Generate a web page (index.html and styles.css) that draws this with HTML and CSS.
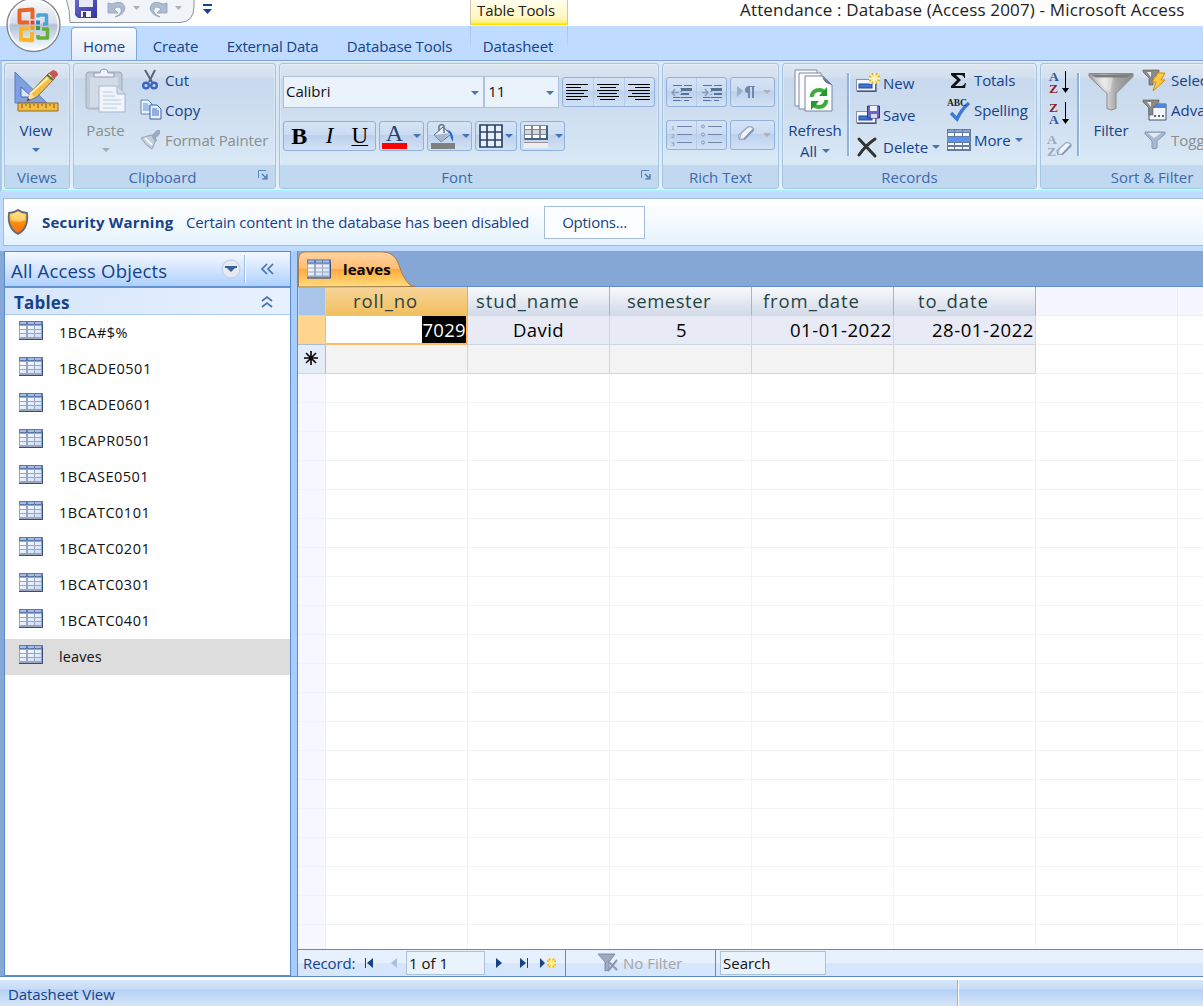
FILE: index.html
```html
<!DOCTYPE html>
<html lang="en">
<head>
<meta charset="utf-8">
<title>Attendance : Database (Access 2007) - Microsoft Access</title>
<link rel="stylesheet" href="styles.css">
</head>
<body>
<svg class="defs" width="0" height="0">
  <defs>
    <linearGradient id="gCell" x1="0" y1="0" x2="1" y2="1"><stop offset="0" stop-color="#fff"/><stop offset="1" stop-color="#c9dcfb"/></linearGradient>
    <linearGradient id="gSilver" x1="0" x2="1"><stop offset="0" stop-color="#999"/><stop offset=".35" stop-color="#e2e2e2"/><stop offset=".6" stop-color="#aaa"/><stop offset="1" stop-color="#888"/></linearGradient>
    <linearGradient id="gOrb" x1="0" y1="0" x2="0" y2="1"><stop offset="0" stop-color="#fbfcfd"/><stop offset=".46" stop-color="#d8dfe9"/><stop offset=".5" stop-color="#b3c0d4"/><stop offset=".8" stop-color="#dfe9f4"/><stop offset="1" stop-color="#fff"/></linearGradient>
    <linearGradient id="gShield" x1="0" y1="0" x2="0" y2="1"><stop offset="0" stop-color="#ffe08a"/><stop offset=".4" stop-color="#ffb32b"/><stop offset=".5" stop-color="#f88f0c"/><stop offset="1" stop-color="#ff6a1a"/></linearGradient>
    <linearGradient id="gTab" x1="0" y1="0" x2="0" y2="1"><stop offset="0" stop-color="#ffd3a0"/><stop offset=".48" stop-color="#ffbd74"/><stop offset=".5" stop-color="#ffa83f"/><stop offset="1" stop-color="#ffdf7c"/></linearGradient>
    <linearGradient id="gPurple" x1="0" y1="0" x2="1" y2="1"><stop offset="0" stop-color="#6a6ad0"/><stop offset="1" stop-color="#33339a"/></linearGradient>
    <symbol id="table" viewBox="0 0 24 19">
      <rect width="24" height="19" fill="#9aa6bd"/><rect width="24" height="4" fill="#5b7ab5"/>
      <path d="M1 1h6v2H1zM9 1h6v2H9zM16 1h6v2h-6z" fill="#a9bce0"/>
      <path d="M1 5h6v3H1zM9 5h6v3H9zM16 5h6v3h-6zM1 9h6v3H1zM9 9h6v3H9zM16 9h6v3h-6zM1 13h6v3H1zM9 13h6v3H9zM16 13h6v3h-6z" fill="url(#gCell)"/>
      <path d="M23.500 3v15.500H0" fill="none" stroke="#3b4f72" stroke-width="1"/>
    </symbol>
    <symbol id="card" viewBox="0 0 24 21">
      <rect x=".5" y="6.500" width="19" height="11" fill="#f4f7fb" stroke="#8794ab"/><path d="M1 18.500h19V8" stroke="#4b566c" stroke-width="1.200" fill="none"/><rect x="3" y="11" width="13" height="4" fill="#3f76d6" stroke="#1d479b"/>
    </symbol>
    <symbol id="funnel" viewBox="0 0 46 40"><path d="M1 2h44v3L28 22v15q-5 3-9 0V22L1 5z" fill="url(#gSilver)" stroke="#8b8b8b"/><path d="M3 3h40l-4 3H8z" fill="#7c7c7c"/><path d="M5 6h20l-3 15z" fill="#fff" opacity=".35"/></symbol>
    <symbol id="launch" viewBox="0 0 10 10"><path d="M.5 8V.5H8" fill="none" stroke="#5b86b8"/><path d="M4 4l4 4M9 4v5H4" fill="none" stroke="#4773aa" stroke-width="1.200"/><path d="M9 5v4H5z" fill="#5b86b8"/></symbol>
    <symbol id="star" viewBox="0 0 10 10"><path d="M0 0h10v10H0z" fill="#ffdf57"/><path d="M5 0v10M0 5h10M1 1l8 8M9 1l-8 8" stroke="#fff6c0"/><path d="M3 0v2M7 0v2M0 3h2M0 7h2M10 3H8M10 7H8M3 10V8M7 10V8" stroke="#d7a318"/></symbol>
    <symbol id="eraser" viewBox="0 0 20 18"><path d="M2 11L12 2q4-1 6 2L8 15H3z" fill="#eef3fa" stroke="#9aa9c2" stroke-width="1.500"/><path d="M3 15l2-6" stroke="#9aa9c2"/><path d="M8 15L18 5" stroke="#8295b5" stroke-width="2"/></symbol>
  </defs>
</svg>

<div class="app">
  <header class="titlebar">
    <span class="tools-title">Table Tools</span>
    <span class="window-title">Attendance : Database (Access 2007) - Microsoft Access</span>
  </header>

  <nav class="tabs">
    <a class="tab active">Home</a><a class="tab create">Create</a><a class="tab external">External Data</a><a class="tab database">Database Tools</a><a class="tab context">Datasheet</a>
  </nav>

  <svg class="quick" width="230" height="56" viewBox="0 0 230 56">
    <path d="M66 -2Q70 10 70 22.500H180Q194 22 194 6V-2z" fill="#f1f5fa" stroke="#8d939c"/>
    <path d="M75 -2h22v20H78l-3-3z" fill="url(#gPurple)"/><path d="M79 -2h14v9H79z" fill="#e6eaf8"/><path d="M81 11h10v6H81z" fill="#f3f3f8"/><path d="M83 12h3v5h-3z" fill="#38388f"/>
    <path d="M108 3v10h10l-4-4q5-4 7 0t-6 8q9-2 10-9-2-9-13-4z" fill="#aebbd0" stroke="#8f9fb8" stroke-width=".8"/>
    <path d="M167 3v10h-10l4-4q-5-4-7 0t6 8q-9-2-10-9 2-9 13-4z" fill="#aebbd0" stroke="#8f9fb8" stroke-width=".8"/>
    <path d="M133 6h7l-3.500 4zM175 6h7l-3.500 4z" fill="#b0b0b0"/>
    <path d="M203 4h9v2h-9zM203 9h9l-4.500 5z" fill="#15428b"/>
    <circle cx="33.500" cy="25" r="26.500" fill="url(#gOrb)" stroke="#84868c" stroke-width="1.300"/><circle cx="33.500" cy="25" r="24.800" fill="none" stroke="#fff" stroke-width="1.500" opacity=".8"/>
    <g fill="none" stroke-linejoin="round">
      <path d="M29 22.500h-9.500V10.500l13-1V19" stroke="#e8632a" stroke-width="4"/>
      <path d="M38 17.500v-2.500h8.500v9H43" stroke="#4aa5dc" stroke-width="3.500"/>
      <path d="M29 28.500h-8V39.500l11 1V32" stroke="#fbb423" stroke-width="4"/>
      <path d="M42 29h5.500v9H38v-3" stroke="#65ad3c" stroke-width="3.500"/>
    </g>
    <path d="M30.500 20.500h4v4h-4z" fill="#e6402a"/><path d="M36 20.500h4v4h-4z" fill="#2d84cf"/><path d="M30.500 26h4v4h-4z" fill="#f49a18"/><path d="M36 26h4v4h-4z" fill="#3c9c40"/>
  </svg>

  <section class="ribbon">
    <div class="group views">
      <div class="body">
        <div class="big">
          <svg width="46" height="44" viewBox="0 0 46 44"><path d="M2 3l32 31H2z" fill="#7f9fe0" stroke="#5a7cc8"/><path d="M8 18l11 10H8z" fill="#dbe6fb" stroke="#4468b8"/><path d="M14 32l4-9L36 4l6 5-18 19z" fill="#f2bc4e" stroke="#8f6a2a"/><path d="M17 25L38 6" stroke="#fff0a8" stroke-width="2"/><path d="M14 32l3-8 5 4z" fill="#f7dfb5"/><path d="M14 32l1-3 2 2z" fill="#333"/><path d="M36 4l4-3q5 1 5 5l-4 4z" fill="#c7555d"/><path d="M34 6l6 5" stroke="#526d55" stroke-width="2"/><path d="M5 34h40v8H5z" fill="#f4bd43" stroke="#96681c"/><path d="M9 35v4M13 35v2M17 35v4M21 35v2M25 35v4M29 35v2M33 35v4M37 35v2M41 35v4" stroke="#7c5414"/></svg>
          <span>View</span><i class="arrow"></i>
        </div>
      </div>
      <div class="caption">Views</div>
    </div>

    <div class="group clipboard">
      <div class="body">
        <div class="big muted">
          <svg width="42" height="46" viewBox="0 0 42 46"><rect x="1" y="4" width="36" height="37" rx="3" fill="#c0cada" stroke="#a0abba"/><rect x="5" y="9" width="28" height="30" fill="#d3dbe7"/><path d="M9 9V5h6q0-4 4-4t4 4h6v4z" fill="#eef2f7" stroke="#929daf"/><path d="M14 18h18l8 8v18H14z" fill="#f1f5fb" stroke="#a6b5cb"/><path d="M32 18v8h8" fill="#cfdbea" stroke="#a6b5cb"/><path d="M18 24h10M18 28h12M18 32h18M18 36h18M18 40h14" stroke="#bccadd"/></svg>
          <span>Paste</span><i class="arrow"></i>
        </div>
        <div class="list">
          <div class="item cut"><svg width="22" height="22" viewBox="0 0 22 22"><path d="M5 1l7 12M15 1L9 13" stroke="#58647a" stroke-width="2"/><circle cx="6" cy="16.500" r="2.800" fill="none" stroke="#3b67bd" stroke-width="2.400"/><circle cx="14" cy="16.500" r="2.800" fill="none" stroke="#3b67bd" stroke-width="2.400"/></svg><span>Cut</span></div>
          <div class="item copy"><svg width="22" height="22" viewBox="0 0 22 22"><path d="M1 1h7l4 4v10H1z" fill="#eaf2ff" stroke="#5e82be"/><path d="M3 5h5M3 7h7M3 9h7M3 11h7" stroke="#6289ca"/><path d="M10 6h7l4 4v10H10z" fill="#eaf2ff" stroke="#355fa8"/><path d="M12 10h5M12 12h7M12 14h7M12 16h7" stroke="#3c6cc0"/></svg><span>Copy</span></div>
          <div class="item painter muted"><svg width="22" height="20" viewBox="0 0 22 20"><path d="M1 8l10-3 5 5-4 9q-6-3-11-11z" fill="#c3ccdc" stroke="#96a3b8"/><path d="M11 5l2-1 4-4h3v4l-4 4 1 3-2 1z" fill="#9ca9be"/><path d="M5 8l7 7" stroke="#f6f8fc" stroke-width="2"/></svg><span>Format Painter</span></div>
        </div>
      </div>
      <div class="caption">Clipboard<svg class="launcher" width="10" height="10"><use href="#launch"/></svg></div>
    </div>

    <div class="group font">
      <div class="body">
        <div class="row first">
          <div class="combo face">Calibri<i class="arrow"></i></div><div class="combo size">11<i class="arrow"></i></div>
          <div class="buttons aligns">
            <svg width="31" height="28" viewBox="0 0 31 28"><path d="M3 6.500h22M3 9.500h15M3 12.500h22M3 15.500h18M3 18.500h22M3 21.500h15" stroke="#000"/></svg>
            <svg width="31" height="28" viewBox="0 0 31 28"><path d="M3 6.500h22M6 9.500h16M3 12.500h22M5 15.500h18M3 18.500h22M6 21.500h15" stroke="#000"/></svg>
            <svg width="31" height="28" viewBox="0 0 31 28"><path d="M3 6.500h22M10 9.500h15M3 12.500h22M7 15.500h18M3 18.500h22M10 21.500h15" stroke="#000"/></svg>
          </div>
        </div>
        <div class="row second">
          <div class="buttons letters"><b>B</b><em>I</em><u>U</u></div>
          <div class="buttons single"><span class="glyph red">A</span><i class="arrow"></i></div>
          <div class="buttons single"><svg width="26" height="26" viewBox="0 0 26 26"><path d="M4 12l9-8 8 7-10 8z" fill="#eaf0f8" stroke="#53667f"/><path d="M4 12l16-2-9 9z" fill="#a6b6cc"/><path d="M9 8V3q3-3 5 0v7" fill="none" stroke="#6a7180" stroke-width="1.500"/><path d="M16 7q8 0 7 12-3-4-3-8z" fill="#2d66d1"/><path d="M1 20h24v6H1z" fill="#808080"/></svg><i class="arrow"></i></div>
          <div class="buttons single narrow"><svg width="26" height="26" viewBox="0 0 26 26"><path d="M2 2h22v22H2zM2 9h22M2 17h22M9 2v22M17 2v22" fill="#e7effb" stroke="#2d4268" stroke-width="1.700"/></svg><i class="arrow"></i></div>
          <div class="buttons single"><svg width="26" height="26" viewBox="0 0 26 26"><rect x="1" y="2" width="24" height="15" fill="#7f8896"/><path d="M2 3h6v3H2zM10 3h6v3h-6zM18 3h5v3h-5zM2 12h6v3H2zM10 12h6v3h-6zM18 12h5v3h-5z" fill="#fff"/><path d="M2 7h6v4H2zM10 7h6v4h-6zM18 7h5v4h-5z" fill="#d6d6d6"/><path d="M24 3v13H2" fill="none" stroke="#34507a" stroke-width="1.500"/><path d="M1 19h24v6H1z" fill="#eee"/><path d="M1 19.500h24" stroke="#9a9292"/></svg><i class="arrow"></i></div>
        </div>
      </div>
      <div class="caption">Font<svg class="launcher" width="10" height="10"><use href="#launch"/></svg></div>
    </div>

    <div class="group rich">
      <div class="body">
        <div class="row first">
          <div class="buttons pair"><svg width="30" height="28" viewBox="0 0 30 28"><path d="M6 7.500h9M17 7.500h8M6 19.500h7M6 22.500h7M17 22.500h5" stroke="#57719a"/><path d="M14 10h11v3H14zM14 15h8v2h-8zM14 19h11v1H14z" fill="#57719a"/><path d="M12 14.500H6M8 11l-3 3.500L8 18" fill="none" stroke="#8a9dbb" stroke-width="1.500"/><path d="M14 7v16" stroke="#57719a" stroke-dasharray="1 2"/></svg><svg width="30" height="28" viewBox="0 0 30 28"><path d="M6 7.500h9M17 7.500h8M6 19.500h7M6 22.500h7M17 22.500h5" stroke="#57719a"/><path d="M14 10h11v3H14zM17 15h8v2h-8zM14 19h11v1H14z" fill="#57719a"/><path d="M5 14.500h6M8 11l3 3.500L8 18" fill="none" stroke="#8a9dbb" stroke-width="1.500"/><path d="M14 7v16" stroke="#57719a" stroke-dasharray="1 2"/></svg></div>
          <div class="buttons drop"><svg width="26" height="28" viewBox="0 0 26 28"><path d="M6 8l6 5-6 6z" fill="#9aadca"/><path d="M24 8h-7q-3 1-3 4t3 3v5h2V9h2v11h2V9h1z" fill="#7087ab"/></svg><i class="arrow faded"></i></div>
        </div>
        <div class="row second">
          <div class="buttons pair"><svg width="30" height="28" viewBox="0 0 30 28"><path d="M10 5.500h15M10 13.500h15M10 21.500h15" stroke="#7087ab"/><g class="tiny"><text x="4" y="8.500">1</text><text x="4" y="16.500">2</text><text x="4" y="24.500">3</text></g></svg><svg width="30" height="28" viewBox="0 0 30 28"><path d="M11 5.500h14M11 13.500h14M11 21.500h14" stroke="#7087ab"/><g fill="#c6d3e8" stroke="#899cba"><circle cx="6" cy="5.500" r="1.500"/><circle cx="6" cy="13.500" r="1.500"/><circle cx="6" cy="21.500" r="1.500"/></g></svg></div>
          <div class="buttons drop"><svg width="26" height="28" viewBox="0 0 26 28"><use href="#eraser" x="5" y="4" width="20" height="17"/></svg><i class="arrow faded"></i></div>
        </div>
      </div>
      <div class="caption">Rich Text</div>
    </div>

    <div class="group records">
      <div class="body">
        <div class="big refresh">
          <svg width="42" height="46" viewBox="0 0 42 46"><path d="M1 2h22v36H1z" fill="#fafcff" stroke="#7e8a9f"/><path d="M5 5h22v36H5z" fill="#fafcff" stroke="#7e8a9f"/><path d="M11 8h18l9 9v26H11z" fill="#fff" stroke="#77839a"/><path d="M28 8q2 8 10 9z" fill="#5c6f92"/><g fill="none" stroke="#3aae3d" stroke-width="4"><path d="M17.500 29q1-7 8-7 3 0 5 2.500"/><path d="M32.500 32q-1 7-8 7-3 0-5-2.500"/></g><path d="M33 19v9h-8zM17 42v-9h8z" fill="#239a2d"/></svg>
          <span>Refresh</span><span class="second-line">All<i class="arrow"></i></span>
        </div>
        <i class="divider"></i>
        <div class="list record-a">
          <div class="item new"><svg width="24" height="21"><use href="#card"/><use href="#star" x="13" y="0" width="11" height="11"/></svg><span>New</span></div>
          <div class="item save"><svg width="24" height="21"><use href="#card"/><path d="M11.500 1h12v12h-12z" fill="#6b67c0" stroke="#343388"/><path d="M14 1h7v5h-7z" fill="#eef0ff"/><path d="M15 9h6v4h-6z" fill="#d5d6ef"/></svg><span>Save</span></div>
          <div class="item delete"><svg width="24" height="21"><path d="M3 2l16 17M19 2q-9 6-16 16" stroke="#333" stroke-width="3" fill="none" stroke-linecap="round"/></svg><span>Delete</span><i class="arrow"></i></div>
        </div>
        <div class="list record-b">
          <div class="item totals"><svg width="24" height="21"><path d="M4 3h14v5h-1q0-3-4-3H9l5 5-6 6h6q3 0 4-3h1l-1 5H4v-2l6-6-6-5z" fill="#111"/></svg><span>Totals</span></div>
          <div class="item spelling"><svg width="24" height="24" viewBox="0 0 24 24"><path d="M4 15l6 6Q14 12 22 5" fill="none" stroke="#3f78d6" stroke-width="3.500"/><text class="abc" x="0" y="8">ABC</text></svg><span>Spelling</span></div>
          <div class="item more"><svg width="24" height="22" viewBox="0 0 24 22"><rect width="24" height="22" fill="#66799e"/><path d="M1 1h6v2H1zM8 1h7v2H8zM16 1h7v2h-7z" fill="#87a4d9"/><path d="M1 4h6v3H1zM8 4h7v3H8zM16 4h6v3h-6zM1 14h6v2H1zM8 14h7v2H8zM16 14h6v2h-6zM1 18h6v2H1zM8 18h7v2H8zM16 18h6v2h-6z" fill="#f5f8ff"/><path d="M0 8h23v5H0z" fill="#5a92ec"/></svg><span>More</span><i class="arrow"></i></div>
        </div>
      </div>
      <div class="caption">Records</div>
    </div>

    <div class="group sort">
      <div class="body">
        <div class="sorters">
          <svg width="24" height="24" viewBox="0 0 24 24"><text class="sort-letter blue" x="1" y="10">A</text><text class="sort-letter maroon" x="1" y="22">Z</text><path d="M17.500 0v20" stroke="#000"/><path d="M14 17h7l-3.500 5z" fill="#000"/></svg>
          <svg width="24" height="24" viewBox="0 0 24 24"><text class="sort-letter maroon" x="1" y="10">Z</text><text class="sort-letter blue" x="1" y="22">A</text><path d="M17.500 0v20" stroke="#000"/><path d="M14 17h7l-3.500 5z" fill="#000"/></svg>
          <svg width="26" height="25" viewBox="0 0 26 25"><text class="sort-letter gray" x="-1" y="11">A</text><text class="sort-letter gray" x="-1" y="23">Z</text><use href="#eraser" x="7" y="8" width="18" height="16"/></svg>
        </div>
        <i class="divider"></i>
        <div class="big filter"><svg width="46" height="40"><use href="#funnel"/></svg><span>Filter</span></div>
        <div class="list filters">
          <div class="item"><svg width="24" height="23"><path d="M0 1h16v2l-6 6v7H6V9L0 3z" fill="#8a8a8a" stroke="#555" stroke-width=".6"/><path d="M4 3h4v5z" fill="#eee"/><path d="M15 4h7l-4 7h4L10 22l3-9H9z" fill="#ffc93c" stroke="#d18b14"/></svg><span>Selection</span></div>
          <div class="item"><svg width="24" height="21"><path d="M6 4h17v16H6z" fill="#f2f6fd" stroke="#43536f"/><path d="M6 4h17v4H6z" fill="#4a87e5"/><path d="M11 16h2M15 16h2M19 16h2" stroke="#333" stroke-width="1.500"/><path d="M0 0h16v2l-6 6v7H6V8L0 2z" fill="#8a8a8a" stroke="#555" stroke-width=".6"/><path d="M4 2h4v5z" fill="#eee"/></svg><span>Advanced</span></div>
          <div class="item muted"><svg width="24" height="21"><path d="M2 2h20v2l-8 7v7q-3 2-5 0v-7L2 4z" fill="#a9b9d1" stroke="#8496b4"/><path d="M5 3h13l-7 5z" fill="#e4ebf5"/></svg><span>Toggle</span></div>
        </div>
      </div>
      <div class="caption">Sort &amp; Filter</div>
    </div>
  </section>

  <section class="message">
    <svg width="22" height="26" viewBox="0 0 22 26"><path d="M11 1q4 3 9 3 2 15-9 21Q0 19 2 4q5 0 9-3z" fill="url(#gShield)" stroke="#666b73" stroke-width="1.800"/><path d="M11 3q3 2 7 3v5q-7 4-14 0V6q4-1 7-3z" fill="#fff2b0" opacity=".45"/></svg>
    <strong>Security Warning</strong><span>Certain content in the database has been disabled</span><button type="button">Options...</button>
  </section>

  <main class="workspace">
    <aside class="pane">
      <div class="pane-head"><span>All Access Objects</span>
        <svg class="circle" width="20" height="20" viewBox="0 0 20 20"><circle cx="10" cy="10" r="9" fill="#e5eaf2" stroke="#bccbe0"/><path d="M4 7h12v2h-2l-4 4-4-4H4z" fill="#3b5f9e"/></svg>
        <svg class="collapse" width="44" height="30" viewBox="0 0 44 30"><path d="M.5 1v28" stroke="#9fbce4"/><path d="M1.500 1v28" stroke="#fff"/><path d="M23 10l-5 5 5 5M29 10l-5 5 5 5" fill="none" stroke="#4773b3" stroke-width="1.700"/></svg>
      </div>
      <div class="pane-group"><strong>Tables</strong><svg width="12" height="14" viewBox="0 0 12 14"><path d="M1 6l5-4 5 4M1 12l5-4 5 4" fill="none" stroke="#4773b3" stroke-width="1.700"/></svg></div>
      <ul class="objects">
        <li><svg width="24" height="19"><use href="#table"/></svg><span>1BCA#$%</span></li>
        <li><svg width="24" height="19"><use href="#table"/></svg><span>1BCADE0501</span></li>
        <li><svg width="24" height="19"><use href="#table"/></svg><span>1BCADE0601</span></li>
        <li><svg width="24" height="19"><use href="#table"/></svg><span>1BCAPR0501</span></li>
        <li><svg width="24" height="19"><use href="#table"/></svg><span>1BCASE0501</span></li>
        <li><svg width="24" height="19"><use href="#table"/></svg><span>1BCATC0101</span></li>
        <li><svg width="24" height="19"><use href="#table"/></svg><span>1BCATC0201</span></li>
        <li><svg width="24" height="19"><use href="#table"/></svg><span>1BCATC0301</span></li>
        <li><svg width="24" height="19"><use href="#table"/></svg><span>1BCATC0401</span></li>
        <li class="selected"><svg width="24" height="19"><use href="#table"/></svg><span>leaves</span></li>
      </ul>
    </aside>
    <section class="document">
      <div class="doc-tabs">
        <svg class="tab-shape" width="120" height="36" viewBox="0 0 120 36"><path d="M.5 36V8Q1 .8 8 .8H84Q97 1 101 14T112 34Q114 35 118 35.500z" fill="url(#gTab)" stroke="#a77a4a"/></svg>
        <div class="tab-label"><svg width="24" height="20"><use href="#table" width="24" height="20"/></svg><strong>leaves</strong></div>
      </div>
      <table class="sheet">
        <colgroup><col class="selector"><col class="field"><col class="field"><col class="field"><col class="field"><col class="field"><col class="field"><col></colgroup>
        <thead><tr><th class="corner"></th><th class="current roll">roll_no</th><th class="stud">stud_name</th><th class="sem">semester</th><th class="from">from_date</th><th class="last to">to_date</th><th class="blank"></th><th class="blank"></th></tr></thead>
        <tbody>
          <tr class="data"><th class="now"></th><td class="editing"><mark>7029</mark></td><td class="name">David</td><td class="mid">5</td><td class="date">01-01-2022</td><td class="date">28-01-2022</td><td class="blank"></td><td class="blank"></td></tr>
          <tr class="fresh"><th><svg width="14" height="14" viewBox="0 0 14 14"><path d="M7 0v14M0 7h14M2 2l10 10M12 2L2 12" stroke="#000" stroke-width="1.600"/></svg></th><td></td><td></td><td></td><td></td><td></td><td class="blank"></td><td class="blank"></td></tr>
        </tbody>
      </table>
      <div class="empty-rows"></div>
      <footer class="navigator">
        <span class="record">Record:</span>
        <svg width="36" height="12" viewBox="0 0 36 12"><path d="M0 1h1v10H0zM8 1v10L2 6z" fill="#15428b"/><path d="M32 1v10l-6-5z" fill="#a9bfe3"/></svg>
        <span class="position">1 of 1</span>
        <svg class="moves" width="62" height="12" viewBox="0 0 62 12"><path d="M1 1l6 5-6 5zM25 1l6 5-6 5zM32 1h1v10h-1zM45 1l5 5-5 5z" fill="#15428b"/><use href="#star" x="52" y="1" width="9" height="10"/></svg>
        <span class="no-filter"><svg width="22" height="20" viewBox="0 0 22 20"><path d="M1 1h17l-6 8v8l-4 1V9z" fill="#9daac0" stroke="#7f8da8"/><path d="M11 8l9 9M20 7l-9 11" stroke="#8b99b3" stroke-width="2"/></svg>No Filter</span>
        <span class="search">Search</span>
      </footer>
    </section>
  </main>

  <footer class="status"><span>Datasheet View</span></footer>
</div>
</body>
</html>
```
FILE: styles.css
```css
* { box-sizing: border-box; }
body { margin: 0; font-family: "Open Sans", "Noto Sans", sans-serif; font-size: 15px; line-height: 20px; color: #15428b; overflow: hidden; }
svg { display: block; flex: none; overflow: visible; }
.defs { position: absolute; }
.app { position: relative; width: 1203px; height: 1006px; display: flex; flex-direction: column; overflow: hidden; background: #bfdbff; white-space: nowrap; }

.titlebar { height: 26px; flex: none; display: flex; background: #fff; padding-left: 470px; color: #222; }
.tools-title { width: 98px; height: 25px; padding: 0 0 0 6px; letter-spacing: -.1px; border: solid #ccc9aa; border-width: 0 1px; background: linear-gradient(#fffef0, #fff6b8 75%, #ffee6a 92%, #ffdf00 96%); }
.window-title { margin-left: 172px; font-size: 17px; letter-spacing: .16px; }

.tabs { height: 34px; flex: none; display: flex; align-items: flex-end; padding-left: 71px; background: #bfdbff; }
.tab { height: 34px; padding-top: 10px; text-align: center; letter-spacing: -.1px; }
.tab.active { width: 66px; height: 33px; padding-top: 8px; border: 1px solid #7da9df; border-bottom: 0; border-radius: 4px 4px 0 0; background: linear-gradient(#fafcff, #e0ebf8); }
.create { width: 77px; }
.external { width: 117px; letter-spacing: -.2px; }
.database { width: 137px; }
.context { width: 98px; margin-left: 2px; padding-right: 2px; border: solid; border-width: 0 1px; border-image: linear-gradient(#9fbfe9, #bfdbff 75%) 1; }
.quick { position: absolute; left: 0; top: 0; }

.ribbon { height: 132px; flex: none; display: flex; gap: 3px; padding: 2px 0 0 3px; border-top: 1px solid #7ea7e0; border-left: 2px solid #a7c9ef; border-bottom: 2px solid #a5f0fa; background: linear-gradient(#dfeaf5, #d5e4f4 50%, #e3f3fc); }
.group { height: 126px; flex: none; border: 1px solid #a6c4df; border-radius: 3px; overflow: hidden; box-shadow: inset 0 0 0 1px #e4effa99; background: linear-gradient(#dfe8f2, #d2dfed 14px, #c8d8ed 15px, #d8e8f5 100px); }
.views { width: 66px; margin-left: -1px; } .clipboard { width: 203px; } .font { width: 380px; } .rich { width: 117px; } .records { width: 255px; } .sort { width: 230px; }
.body { height: 101px; display: flex; }
.caption { height: 24px; padding-top: 2px; text-align: center; color: #3e6aaa; background: #c1d8f1; position: relative; }
.clipboard .caption, .font .caption { padding-right: 24px; }
.sort .caption { padding-right: 6px; }
.launcher { position: absolute; right: 7px; top: 5px; }
.muted { color: #8d8d8d; }
.arrow { width: 0; height: 0; flex: none; border: solid transparent; border-width: 4px 4px 0; border-top-color: #4773b3; }
.muted .arrow { border-top-color: #aaa; }
.arrow.faded { border-top-color: #b5b0b0; }
.big { display: flex; flex-direction: column; align-items: center; padding-top: 4px; }
.big > svg { height: 46px; }
.big span { margin-top: 6px; }
.big .arrow { margin-top: 8px; }
.views .big { width: 62px; }
.clipboard .big { width: 63px; }
.list { display: flex; flex-direction: column; }
.item { height: 30px; display: flex; align-items: center; gap: 3px; }
.clipboard .list { padding: 1px 0 0 3px; }
.painter { letter-spacing: -.1px; }

.font .body, .rich .body { display: block; padding: 12px 3px; }
.row { display: flex; }
.font .row.second { gap: 3px; margin-top: 13px; }
.combo { height: 32px; border: 1px solid #abc1de; background: #eaf2fb; color: #111; display: flex; align-items: center; justify-content: space-between; padding: 0 4px 2px 2px; }
.combo .arrow { margin-top: 4px; }
.face { width: 202px; } .size { width: 75px; padding-left: 3px; }
.buttons { height: 30px; display: flex; align-items: center; border: 1px solid #91b0da; border-radius: 3px; background: linear-gradient(#d5e3f5, #cbdcf3 45%, #bdd1ec 48%, #d2e2f5); }
.font .first .buttons { margin-top: 1px; }
.aligns { width: 93px; margin-left: 3px; }
.buttons > * + svg { box-shadow: -1px 0 #b6cce9; }
.letters { width: 93px; font: 23px/28px "Liberation Serif", serif; color: #000; }
.letters > * { width: 31px; text-align: center; }
.letters b { font-size: 24px; }
.letters u { text-underline-offset: 2px; text-decoration-thickness: 1px; }
.single { width: 45px; gap: 6px; padding-left: 2px; }
.narrow { width: 42px; gap: 1px; }
.glyph { width: 25px; height: 26px; border-bottom: 6px solid #f00; color: #263f73; text-align: center; font: 24px/20px "Liberation Serif", serif; }
.rich .row.first { padding-top: 1px; gap: 3px; } .rich .row.second { margin-top: 13px; gap: 3px; }
.pair { width: 61px; } .drop { width: 45px; gap: 6px; }
.tiny { font: 7px "Liberation Serif", serif; fill: #7087ab; }

.records .big { width: 64px; }
.refresh .second-line { display: flex; gap: 5px; margin-top: 1px; }
.divider { width: 3px; height: 83px; margin-top: 9px; flex: none; background: #8eb2da; border-right: 1px solid #edf5fd; }
.record-a { width: 97px; padding: 3px 0 0 6px; } .record-a .item { height: 32px; }
.record-b { padding-top: 1px; }
.record-b .item { letter-spacing: -.1px; }
.delete .arrow { margin-left: 1px; } .more .arrow { margin-left: 1px; }
.abc { font: bold 9.500px "Liberation Serif", serif; fill: #222; }
.sorters { width: 36px; padding: 7px 0 0 7px; display: flex; flex-direction: column; gap: 7px; }
.sort-letter { font: 600 13.500px "Liberation Serif", serif; }
.blue { fill: #30569c; } .maroon { fill: #8f242d; } .gray { fill: #9aa8bf; }
.filter { width: 62px; } .filter > svg { margin-top: 1px; height: 45px; }
.filters { padding: 1px 0 0 1px; }
.filters .item { gap: 4px; }

.message { height: 48px; flex: none; margin: 6px 0 5px 3px; display: flex; align-items: center; padding: 0 0 0 3px; border: 1px solid #a0bddd; border-right: 0; background: linear-gradient(#fff, #f2f9fe 55%, #e4f2fd); }
.message strong { width: 132px; margin-left: 13px; letter-spacing: .2px; }
.message span { width: 344px; margin-left: 12px; letter-spacing: -.16px; }
.message button { width: 101px; height: 33px; margin-left: 14px; padding: 0; font: inherit; color: inherit; letter-spacing: -.25px; border: 1px solid #a5bddb; background: #fbfdff; }

.workspace { height: 726px; flex: none; display: flex; padding-left: 4px; background: #86a8d6; border-bottom: 1px solid #5b87c2; }
.pane { width: 287px; flex: none; border: 1px solid #5b8bce; background: #fff; }
.pane-head { height: 36px; display: flex; align-items: center; padding-left: 6px; font-size: 18.500px; border-bottom: 2px solid #6593cf; background: linear-gradient(#f4f8ff, #d7e7fd 45%, #add1ff); }
.pane-head span { width: 211px; padding-top: 3px; letter-spacing: .18px; }
.circle { margin: 0 3px 0 auto; }
.collapse { margin-right: 2px; }
.pane-group { height: 27px; display: flex; align-items: center; padding: 1px 17px 0 9px; justify-content: space-between; font-size: 17px; border-bottom: 1px solid #a9cbf5; background: linear-gradient(90deg, #d6e6fb, #e8f1ff); }
.pane-group strong { letter-spacing: .2px; padding-top: 2px; }
.objects { list-style: none; margin: 0; padding: 0; color: #111; }
.objects li { height: 36px; display: flex; gap: 16px; padding: 6px 0 0 14px; }
.objects span { font-size: 14.500px; letter-spacing: .5px; padding-top: 2px; }
.objects .selected span { letter-spacing: .1px; }
.selected { background: #ddd; }
.document { width: 912px; display: flex; flex-direction: column; border-left: 1px solid #5b8bce; margin-left: 6px; box-shadow: -6px 0 #aacdff; }
.doc-tabs { height: 36px; flex: none; position: relative; border-bottom: 1px solid #5f8fd0; }
.tab-shape { position: absolute; left: 0; top: 0; }
.tab-label { position: relative; display: flex; gap: 12px; padding: 8px 0 0 9px; color: #000; font-size: 15px; letter-spacing: .05px; }
.sheet { width: 912px; table-layout: fixed; border-collapse: separate; border-spacing: 0; font-size: 18.500px; color: #000; }
.selector { width: 28px; } .field { width: 142px; }
.sheet tr { height: 29px; }
.sheet th, .sheet td { height: 29px; padding: 0; font-weight: 400; line-height: 26px; border-right: 1px solid #ced6e5; border-bottom: 1px solid #ced6e5; }
.sheet thead th { color: #264444; text-align: left; letter-spacing: .9px; border-right-color: #a5b6cc; border-bottom-color: #d2d9e7; background: linear-gradient(#f8fafc, #d2dae8); }
.sheet thead .sem { letter-spacing: .5px; }
.sheet thead .corner { background: #a9c4e9; border: 1px solid #bdd9fb; }
.sheet thead .current { background: linear-gradient(#f8d59a, #f2bf5e); border-bottom-color: #f2bf5e; }
.sheet .roll { padding-left: 27px; } .sheet .stud { padding-left: 8px; } .sheet .sem { padding-left: 17px; } .sheet .from { padding-left: 11px; } .sheet .to { padding-left: 24px; }
.sheet thead .blank { background: #f5f6ff; border-color: #ebedf7; }
.data td { background: #e8ebf5; letter-spacing: .4px; }
.data .now { background: #ffd58f; border-color: #a8bdd5; }
.data .editing { background: #fff; text-align: right; border: solid #ffb966; border-width: 0 2px 2px 0; box-shadow: -1px 0 #ffb966; }
mark { display: block; width: 44px; height: 27px; line-height: 28px; margin-left: auto; color: #fff; background: #000; letter-spacing: .3px; }
.data .name { text-align: center; } .data .mid { text-align: center; padding-left: 2px; } .data .date { text-align: right; padding-right: 1px; letter-spacing: .55px; }
.fresh th { background: #e4ecf8; border-right-color: #a8bdd5; } .fresh th svg { margin: -2px auto 0 6px; width: 14px; }
.fresh td { background: #f3f3f3; }
.sheet td.blank { background: #fff; border-color: #f2f2f5; }
.empty-rows { height: 575px; flex: none; background: linear-gradient(#eceef8, #eceef8) 27px 0 / 1px 100% no-repeat, repeating-linear-gradient(transparent 0 28px, #f2f3f7 28px 29px), repeating-linear-gradient(90deg, transparent 0 141px, #f3f3f6 141px 142px) 28px 0 / 100% 100% no-repeat, linear-gradient(90deg, #f6f7ff 28px, #fff 28px); }
.navigator { height: 27px; flex: none; display: flex; align-items: center; padding-left: 5px; border-top: 1px solid #5b8bce; background: linear-gradient(#e7f1fe 50%, #d5e6fd 51%); }
.record { width: 62px; letter-spacing: -.1px; }
.position, .search { height: 24px; padding: 1px 2px; color: #111; border: 1px solid #abc1de; background: #eaf2fb; }
.position { width: 79px; margin-left: 5px; } .moves { margin-left: 10px; }
.no-filter { width: 151px; height: 26px; display: flex; align-items: center; gap: 4px; margin-left: 8px; padding-left: 31px; border: solid #5b8bce; border-width: 0 1px; color: #a5a5a5; }
.search { width: 106px; margin-left: 4px; }
.status { height: 29px; flex: none; display: flex; padding-left: 8px; border-top: 3px solid #fff; background: linear-gradient(#d7e6f9, #c7dcf8 35%, #b3d0f5 38%, #d7e5f7); }
.status span { width: 950px; height: 26px; padding-top: 4px; letter-spacing: -.1px; border-right: 1px solid #8fb2e0; box-shadow: 1px 0 #fff; }
```
